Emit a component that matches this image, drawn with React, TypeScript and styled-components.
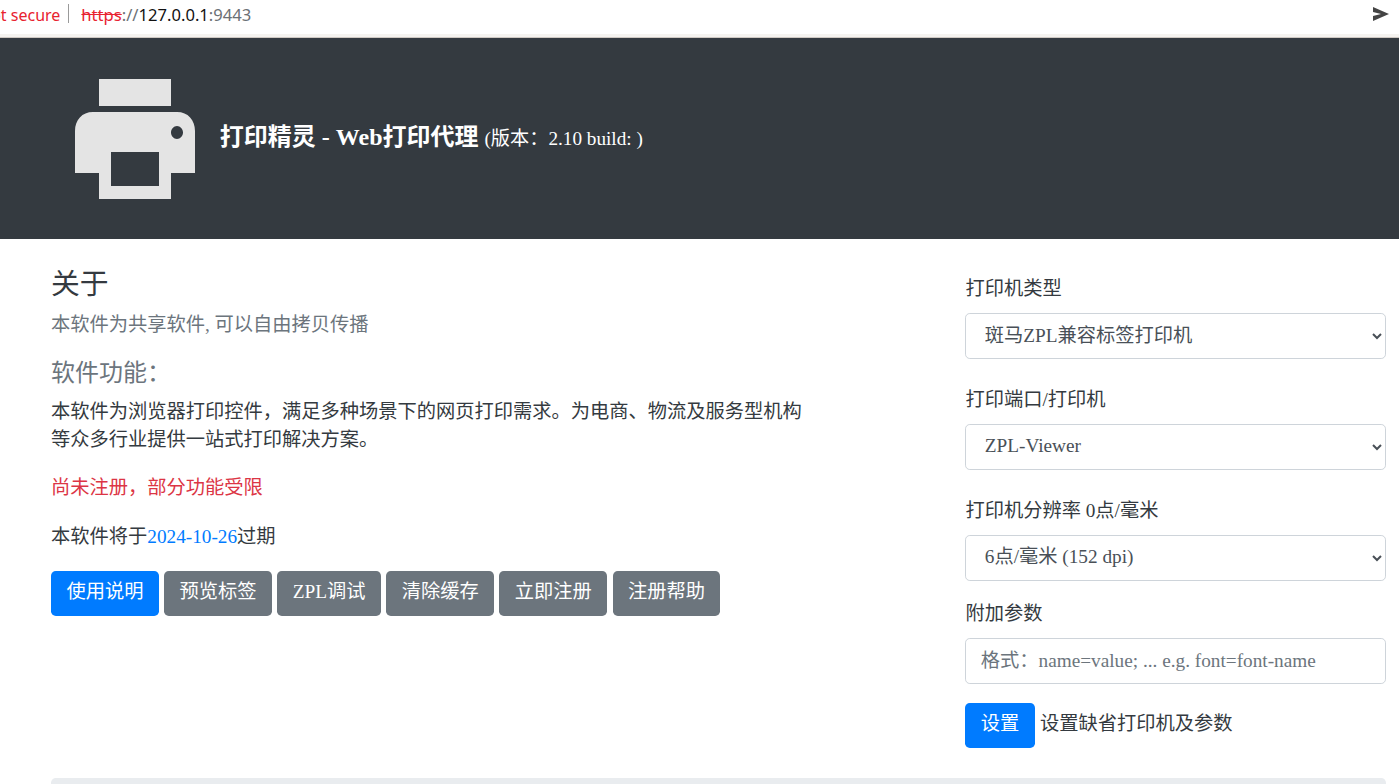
import React from "react";
import styled, { createGlobalStyle } from "styled-components";

const Global = createGlobalStyle`
  html, body { margin: 0; padding: 0; height: 784px; overflow: hidden; background: #fff; }
  html { font-size: 19.25px; }
  body { font-family: "Liberation Serif", "Noto Sans CJK SC", serif; font-size: 19.25px; line-height: 1.5; color: #343a40; }
  * { box-sizing: border-box; }
`;

const AddressBar = styled.div`
  height: 34px; padding-bottom: 4px; display: flex; align-items: center; background: #fff; overflow: hidden;
  font-family: "Noto Sans", "Open Sans", sans-serif; font-size: 16px; white-space: nowrap;
`;
const Secure = styled.span` color: #e8222f; margin-left: -21px; flex: none; `;
const Divider = styled.span` width: 1px; height: 19px; background: #9a9a9a; margin: 0 12px 3px 8px; flex: none; `;
const Url = styled.span` font-size: 16.6px; `;
const Scheme = styled.span` color: #e8222f; text-decoration: line-through; `;
const Dim = styled.span` color: #6b7075; `;
const Host = styled.span` color: #111; `;
const Send = styled.svg` margin-left: auto; margin-right: 10px; margin-bottom: 2px; flex: none; `;
const BarEdge = styled.div` height: 4px; background: #f5f3f0; border-bottom: 1px solid #cfc9c4; `;

const Banner = styled.header`
  height: 201px; background: #343a40; color: #fff; display: flex; align-items: center; padding: 0 0 0 75px; gap: 25px;
`;
const Logo = styled.svg` flex: none; `;
const Title = styled.h4` margin: 0 0 3px -0.2px; font-size: 24px; line-height: 1.2; font-weight: 700; `;
const Version = styled.small` font-size: 19.2px; font-weight: 400; `;

const Body = styled.main` display: flex; padding: 28px 13px 0 51px; align-items: flex-start; `;
const Left = styled.section` flex: none; width: 914.4px; `;
const Right = styled.aside` flex: 1; padding-top: 8.3px; `;

const Heading = styled.h3` margin: 0 0 9.6px; font-size: 28.8px; line-height: 1.2; font-weight: 400; color: #343a40; `;
const Muted = styled.p` margin: 0 0 19.2px; color: #6c757d; `;
const Subheading = styled.h4` margin: 0 0 9.6px; font-size: 24px; line-height: 1.2; font-weight: 400; color: #6c757d; `;
const Para = styled.p` margin: 0 0 18.8px; max-width: 760px; `;
const Danger = styled.p` margin: 0 0 20.4px; color: #dc3545; `;
const DateLink = styled.span` color: #007bff; `;
const Buttons = styled.div` display: flex; gap: 5.4px; margin-top: 2.1px; `;
const Btn = styled.button<{ $primary?: boolean }>`
  font: inherit; color: #fff; height: 45.2px; padding: 0 14.4px 2px; border: 1px solid transparent; border-radius: 4.8px;
  background: ${(p) => (p.$primary ? "#007bff" : "#6c757d")};
  flex: none;
`;

const Group = styled.div<{ $gap: number }>` margin-bottom: ${(p) => p.$gap}px; `;
const Label = styled.label` display: block; margin-bottom: 9.5px; line-height: 28.6px; `;
const Select = styled.select`
  display: block; width: 100%; height: 45.6px; padding: 5.7px 14.4px 7.7px; font: inherit; color: #495057; background: #fff;
  border: 1px solid #ced4da; border-radius: 4.8px;
`;
const Input = styled.input`
  display: block; width: 100%; height: 46px; padding: 6.7px 14.4px; font: inherit; color: #495057; background: #fff;
  border: 1px solid #ced4da; border-radius: 4.8px;
  &::placeholder { color: #6c757d; opacity: 1; }
`;
const SaveRow = styled.div` display: flex; align-items: flex-start; gap: 5.4px; margin-bottom: 29.4px; `;
const SaveText = styled.span` line-height: 41px; `;
const Footer = styled.div` margin: 0 13px 0 51px; height: 60px; background: #e9ecef; border-radius: 4.8px; `;

export default function App() {
  return (
    <>
      <Global />
      <AddressBar>
        <Secure>Not secure</Secure>
        <Divider />
        <Url>
          <Scheme>https</Scheme>
          <Dim>://</Dim>
          <Host>127.0.0.1</Host>
          <Dim>:9443</Dim>
        </Url>
        <Send width="16" height="14" viewBox="0 0 16 14">
          <path d="M0 0 L16 7 L0 14 L0 9 L8 7 L0 5 Z" fill="#444" />
        </Send>
      </AddressBar>
      <BarEdge />
      <Banner>
        <Logo width="120" height="120" viewBox="0 0 120 120">
          <path
            fill="#e4e4e4"
            fillRule="evenodd"
            d="M24 0H96V27H24Z M18 33H102C113 33 120 41 120 52V94H96V120H24V94H0V52C0 41 7 33 18 33Z M36 73V107H84V73Z M102 47C98.7 47 96 50 96 53.5C96 57 98.7 60 102 60C105.3 60 108 57 108 53.5C108 50 105.3 47 102 47Z"
          />
        </Logo>
        <Title>
          {"打印精灵 - Web打印代理 "}
          <Version>{"(版本\uFF1A2.10 build: )"}</Version>
        </Title>
      </Banner>
      <Body>
        <Left>
          <Heading>关于</Heading>
          <Muted>本软件为共享软件, 可以自由拷贝传播</Muted>
          <Subheading>{"软件功能\uFF1A"}</Subheading>
          <Para>{"本软件为浏览器打印控件\uFF0C满足多种场景下的网页打印需求。为电商、物流及服务型机构等众多行业提供一站式打印解决方案。"}</Para>
          <Danger>{"尚未注册\uFF0C部分功能受限"}</Danger>
          <Para>
            本软件将于<DateLink>2024-10-26</DateLink>过期
          </Para>
          <Buttons>
            <Btn $primary>使用说明</Btn>
            <Btn>预览标签</Btn>
            <Btn>ZPL调试</Btn>
            <Btn>清除缓存</Btn>
            <Btn>立即注册</Btn>
            <Btn>注册帮助</Btn>
          </Buttons>
        </Left>
        <Right>
          <Group $gap={27}>
            <Label>打印机类型</Label>
            <Select defaultValue="zpl">
              <option value="zpl">斑马ZPL兼容标签打印机</option>
            </Select>
          </Group>
          <Group $gap={27.2}>
            <Label>打印端口/打印机</Label>
            <Select defaultValue="v">
              <option value="v">ZPL-Viewer</option>
            </Select>
          </Group>
          <Group $gap={19.2}>
            <Label>打印机分辨率 0点/毫米</Label>
            <Select defaultValue="6">
              <option value="6">6点/毫米 (152 dpi)</option>
            </Select>
          </Group>
          <Group $gap={19.4}>
            <Label>附加参数</Label>
            <Input placeholder={"格式\uFF1Aname=value; ... e.g. font=font-name"} />
          </Group>
          <SaveRow>
            <Btn $primary>设置</Btn>
            <SaveText>设置缺省打印机及参数</SaveText>
          </SaveRow>
        </Right>
      </Body>
      <Footer />
    </>
  );
}
